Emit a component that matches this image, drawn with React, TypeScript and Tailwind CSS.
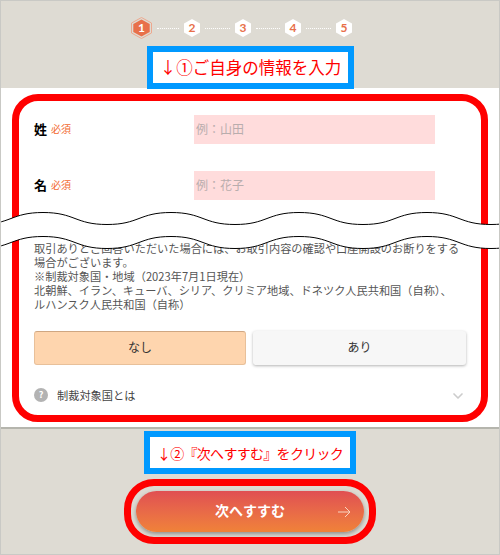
import React from 'react';
import { ChevronDown } from 'lucide-react';

const jp = "font-['Noto_Sans_CJK_JP',sans-serif]";

const Hex = ({ n, active }: { n: number; active?: boolean }) =>
  active ? (
    <svg width="21" height="22" viewBox="0 0 21 22" className="shrink-0">
      <polygon points="10.5,0.5 20.5,6 20.5,16 10.5,21.5 0.5,16 0.5,6" fill="none" stroke="#eda88e" strokeWidth="1" />
      <polygon points="10.5,2.5 18.7,7 18.7,15 10.5,19.5 2.3,15 2.3,7" fill="#e8704a" />
      <text x="10.5" y="15.2" textAnchor="middle" fontSize="12" fontWeight="700" fill="#fff" fontFamily="Lato, sans-serif">{n}</text>
    </svg>
  ) : (
    <svg width="16" height="18" viewBox="0 0 16 18" className="shrink-0">
      <polygon points="8,0 16,4.5 16,13.5 8,18 0,13.5 0,4.5" fill="#fff" />
      <text x="8" y="13.4" textAnchor="middle" fontSize="12" fontWeight="700" fill="#e8704a" fontFamily="Lato, sans-serif">{n}</text>
    </svg>
  );

const Dots = ({ w }: { w: string }) => <div className={`mx-[5px] border-t border-dotted border-white ${w}`} />;

const topEdge =
  'M-21 14.5 C11 14.5 11 2.5 43 2.5 S75 14.5 107 14.5 S139 2.5 171 2.5 S203 14.5 235 14.5 S267 2.5 299 2.5 S331 14.5 363 14.5 S395 2.5 427 2.5 S459 14.5 491 14.5 S523 2.5 555 2.5';
const bottomEdge =
  'M-21 38.5 C11 38.5 11 26.5 43 26.5 S75 38.5 107 38.5 S139 26.5 171 26.5 S203 38.5 235 38.5 S267 26.5 299 26.5 S331 38.5 363 38.5 S395 26.5 427 26.5 S459 38.5 491 38.5 S523 26.5 555 26.5';
const fillBack =
  'V26.5 C523 26.5 523 38.5 491 38.5 S459 26.5 427 26.5 S395 38.5 363 38.5 S331 26.5 299 26.5 S267 38.5 235 38.5 S203 26.5 171 26.5 S139 38.5 107 38.5 S75 26.5 43 26.5 S11 38.5 -21 38.5 Z';

const Wave = () => (
  <svg width="500" height="40" viewBox="0 0 500 40" className="absolute left-[-1px] top-[209px] z-20">
    <path d={`${topEdge} ${fillBack}`} fill="#fff" />
    <path d={topEdge} fill="none" stroke="#000" strokeWidth="1" />
    <path d={bottomEdge} fill="none" stroke="#000" strokeWidth="1" />
  </svg>
);

const NameRow = ({ label, placeholder }: { label: string; placeholder: string }) => (
  <div className="flex items-center">
    <div className="flex w-[160px] items-center gap-[4px] pb-[2px]">
      <span className="text-[13px] font-bold text-black">{label}</span>
      <span className="text-[10px] text-[#f26a30]">必須</span>
    </div>
    <input
      readOnly
      placeholder={placeholder}
      className="h-[29px] w-[241px] bg-[#ffdcdc] px-[2px] pb-[3px] text-[12px] outline-none placeholder:text-[#b9adad]"
    />
  </div>
);

export default function App() {
  return (
    <div className={`relative flex h-[555px] w-[500px] flex-col overflow-hidden border border-[#c9c9c5] bg-[#dedbd3] ${jp}`}>
      <div className="flex items-center pl-[130px] pt-[16px]">
        <Hex n={1} active />
        <Dots w="w-[22px]" />
        <Hex n={2} />
        <Dots w="w-[25px]" />
        <Hex n={3} />
        <Dots w="w-[24px]" />
        <Hex n={4} />
        <Dots w="w-[25px]" />
        <Hex n={5} />
      </div>

      <div className="relative z-10 -mb-px ml-[146px] mt-[7px] flex h-[43px] w-[207px] items-center justify-center whitespace-nowrap border-[6px] border-[#0099ff] bg-white text-[16.5px] font-normal leading-none text-[#ff0000]">
        ↓①ご自身の情報を入力
      </div>

      <div className="h-[341px] border-b-2 border-[#b5b5ad] bg-white px-[11px] pt-[6px]">
        <div className="h-[328px] rounded-[26px] border-[7px] border-[#ff0000] pl-[15px] pt-[14px]">
          <div className="flex flex-col gap-[27px]">
            <NameRow label="姓" placeholder="例：山田" />
            <NameRow label="名" placeholder="例：花子" />
          </div>

          <p className="mt-[41px] whitespace-nowrap text-[11.2px] leading-[14px] text-[#555]">
            取引ありとご回答いただいた場合には、お取引内容の確認や口座開設のお断りをする
            <br />
            場合がございます。
            <br />
            ※制裁対象国・地域（2023年7月1日現在）
            <br />
            北朝鮮、イラン、キューバ、シリア、クリミア地域、ドネツク人民共和国（自称）、
            <br />
            ルハンスク人民共和国（自称）
          </p>

          <div className="mt-[20px] flex gap-[7px]">
            <button className="h-[34px] w-[212px] rounded-[3px] border border-[#e8c09a] border-t-[#cfa681] bg-[#fed5ae] pb-[3px] text-[12px] text-[#333]">
              なし
            </button>
            <button className="h-[34px] w-[213px] rounded-[3px] bg-[#f7f7f7] pb-[3px] text-[12px] text-[#333] shadow-[0_1px_3px_rgba(0,0,0,0.3)]">
              あり
            </button>
          </div>

          <div className="mt-[20px] flex w-[432px] items-center">
            <span className="flex h-[14px] w-[14px] items-center justify-center rounded-full bg-[#b3b3b3] text-[9px] font-bold leading-none text-white">
              ?
            </span>
            <span className="ml-[9px] text-[11.2px] leading-[16px] text-[#444]">制裁対象国とは</span>
            <ChevronDown className="ml-auto mt-[3px] h-[16px] w-[16px] text-[#cccccc]" strokeWidth={2.5} />
          </div>
        </div>
      </div>

      <div className="ml-[143px] mt-[2px] flex h-[43px] w-[212px] items-center justify-center whitespace-nowrap border-[6px] border-[#0099ff] bg-white text-[14px] font-normal leading-none tracking-[-0.7px] text-[#ff0000]">
        ↓②『次へすすむ』をクリック
      </div>

      <div className="ml-[123px] mt-[5px] h-[65px] w-[252px] rounded-[30px] border-[7px] border-[#ff0000] p-[5px]">
        <div className="relative flex h-[41px] items-center justify-center rounded-full bg-gradient-to-b from-[#e04f52] to-[#f08238] pb-[3px] text-[14px] font-bold text-white shadow-[0_2px_4px_rgba(0,0,0,0.35)]">
          次へすすむ
          <svg width="13" height="12" viewBox="0 0 13 12" className="absolute right-[13px] top-[15px]" fill="none" stroke="#f8d5c0" strokeWidth="1">
            <path d="M0 6H12M7 1l5 5-5 5" />
          </svg>
        </div>
      </div>

      <Wave />
    </div>
  );
}
